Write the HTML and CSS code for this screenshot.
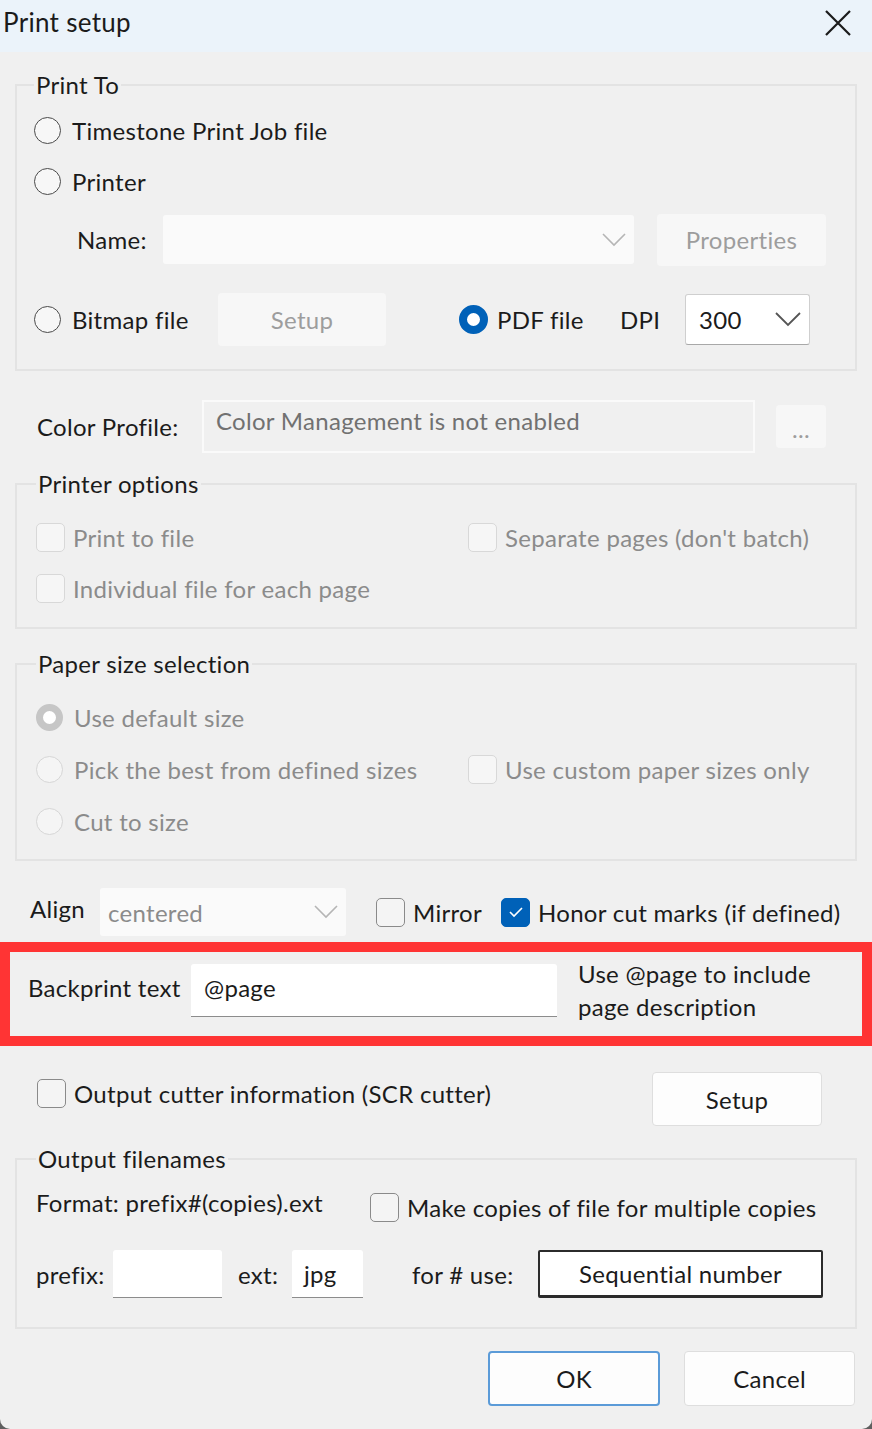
FILE: index.html
```html
<!DOCTYPE html>
<html lang="en">
<head>
    <meta charset="UTF-8">
    <meta name="viewport" content="width=device-width, initial-scale=1.0">
    <title>Print setup</title>
    <link rel="stylesheet" href="styles.css">
</head>
<body>

<div class="dialog">
    <div class="titlebar">
        <span class="title">Print setup</span>
        <svg class="close" width="26" height="26" viewBox="0 0 26 26">
            <path d="M1 1L25 25M25 1L1 25" stroke="#1a1a1a" stroke-width="2.2" fill="none"/>
        </svg>
    </div>

    <div class="content">
        <!-- Print To -->
        <fieldset class="group print-to">
            <legend>Print To</legend>
            <div class="row row-radio">
                <span class="opt"><span class="radio"></span>Timestone Print Job file</span>
            </div>
            <div class="row row-radio">
                <span class="opt"><span class="radio"></span>Printer</span>
            </div>
            <div class="row row-name">
                <span class="name-label">Name:</span>
                <div class="combo name-combo">
                    <span class="combo-text"></span>
                    <svg class="chevron" width="24" height="14" viewBox="0 0 24 14"><path d="M1 1L12 12L23 1" stroke="#b5b5b5" stroke-width="1.6" fill="none"/></svg>
                </div>
                <button class="btn btn-off props">Properties</button>
            </div>
            <div class="row row-output">
                <span class="opt opt-bitmap"><span class="radio"></span>Bitmap file</span>
                <button class="btn btn-off setup-bitmap">Setup</button>
                <span class="opt opt-pdf"><span class="radio radio-on"></span>PDF file</span>
                <span class="dpi-label">DPI</span>
                <div class="combo dpi-combo">
                    <span class="combo-text">300</span>
                    <svg class="chevron" width="26" height="15" viewBox="0 0 26 15"><path d="M1 1L13 13L25 1" stroke="#555" stroke-width="1.8" fill="none"/></svg>
                </div>
            </div>
        </fieldset>

        <!-- Color profile -->
        <div class="row row-profile">
            <span class="profile-label">Color Profile:</span>
            <div class="profile-box">Color Management is not enabled</div>
            <button class="btn btn-off btn-dots">...</button>
        </div>

        <!-- Printer options -->
        <fieldset class="group printer-options">
            <legend>Printer options</legend>
            <div class="row row-check">
                <span class="opt opt-col1 off"><span class="check check-off"></span>Print to file</span>
                <span class="opt off"><span class="check check-off"></span>Separate pages (don't batch)</span>
            </div>
            <div class="row row-check">
                <span class="opt off"><span class="check check-off"></span>Individual file for each page</span>
            </div>
        </fieldset>

        <!-- Paper size -->
        <fieldset class="group paper-size">
            <legend>Paper size selection</legend>
            <div class="row row-paper">
                <span class="opt off"><span class="radio radio-dim"></span>Use default size</span>
            </div>
            <div class="row row-paper">
                <span class="opt opt-col1 off"><span class="radio radio-faint"></span>Pick the best from defined sizes</span>
                <span class="opt off"><span class="check check-off"></span>Use custom paper sizes only</span>
            </div>
            <div class="row row-paper">
                <span class="opt off"><span class="radio radio-faint"></span>Cut to size</span>
            </div>
        </fieldset>

        <!-- Align -->
        <div class="row row-align">
            <span class="align-label">Align</span>
            <div class="combo align-combo">
                <span class="combo-text off">centered</span>
                <svg class="chevron" width="24" height="14" viewBox="0 0 24 14"><path d="M1 1L12 12L23 1" stroke="#b5b5b5" stroke-width="1.6" fill="none"/></svg>
            </div>
            <span class="opt opt-mirror"><span class="check"></span>Mirror</span>
            <span class="opt">
                <span class="check check-on">
                    <svg width="16" height="12" viewBox="0 0 16 12"><path d="M2 6L6 10L14 2" stroke="#fff" stroke-width="1.6" fill="none"/></svg>
                </span>Honor cut marks (if defined)</span>
        </div>

        <!-- Backprint (highlighted) -->
        <div class="highlight">
            <span class="backprint-label">Backprint text</span>
            <div class="field backprint-field">@page</div>
            <div class="hint">Use @page to include<br>page description</div>
        </div>

        <!-- Cutter -->
        <div class="row row-cutter">
            <span class="opt opt-cutter"><span class="check"></span>Output cutter information (SCR cutter)</span>
            <button class="btn btn-light cutter-setup">Setup</button>
        </div>

        <!-- Output filenames -->
        <fieldset class="group output-names">
            <legend>Output filenames</legend>
            <div class="row row-format">
                <span class="format-label">Format: prefix#(copies).ext</span>
                <span class="opt opt-copies"><span class="check"></span>Make copies of file for multiple copies</span>
            </div>
            <div class="row row-prefix">
                <span class="prefix-label">prefix:</span>
                <div class="field prefix-field"></div>
                <span class="ext-label">ext:</span>
                <div class="field ext-field">jpg</div>
                <span class="use-label">for # use:</span>
                <button class="btn btn-seq">Sequential number</button>
            </div>
        </fieldset>

        <div class="row row-buttons">
            <button class="btn btn-light btn-ok">OK</button>
            <button class="btn btn-light btn-cancel">Cancel</button>
        </div>
    </div>
</div>

</body>
</html>
```

FILE: styles.css
```css
html {
    background: #5f5f5f;
}

body {
    margin: 0;
    font-family: Lato, "Open Sans", sans-serif;
    font-size: 24px;
    letter-spacing: 0.3px;
    color: #1b1b1b;
}

.dialog {
    width: 872px;
    height: 1429px;
    background: #f0f0f0;
    border-radius: 0 0 10px 10px;
    overflow: hidden;
}

.titlebar {
    height: 52px;
    background: #ebf3fa;
    display: flex;
    align-items: center;
    justify-content: space-between;
    padding: 0 21px 0 3px;
    box-sizing: border-box;
}

.title {
    font-size: 26px;
    margin-top: -8px;
}

.close {
    margin-top: -6px;
}

.content {
    padding: 0 15px;
}

.row {
    display: flex;
    align-items: center;
}

/* group boxes */
.group {
    margin: 0;
    border: 2px solid #e3e3e3;
    padding: 0 0 0 19px;
    min-width: 0;
}

.group legend {
    padding: 0 2px;
    margin-left: 0;
    line-height: 28px;
    height: 28px;
}

/* option = indicator + text */
.opt {
    display: flex;
    align-items: center;
    gap: 8px;
    white-space: nowrap;
}

.off {
    color: #8b8b8b;
}

.radio {
    width: 27px;
    height: 27px;
    border: 1.6px solid #4a4a4a;
    border-radius: 50%;
    box-sizing: border-box;
    background: #f7f7f7;
    flex: none;
    margin-right: 3px;
}

.radio-on {
    border: 8px solid #0061b8;
    background: #fff;
    width: 29px;
    height: 29px;
    margin-right: 1px;
}

.radio-dim {
    border: 7px solid #c6c6c6;
    background: #fff;
    width: 27px;
    height: 27px;
}

.radio-faint {
    border: 1.5px solid #d6d6d6;
    background: #f5f5f5;
}

.check {
    width: 29px;
    height: 29px;
    border: 1.6px solid #8a8a8a;
    border-radius: 5px;
    box-sizing: border-box;
    background: #f4f4f4;
    flex: none;
    display: flex;
    align-items: center;
    justify-content: center;
}

.check-off {
    border-color: #d8d8d8;
    background: #f6f6f6;
}

.check-on {
    background: #0061b8;
    border-color: #0061b8;
}

/* buttons */
.btn {
    font-family: inherit;
    font-size: 24px;
    letter-spacing: 0.3px;
    border: none;
    padding: 0;
    color: #1b1b1b;
    background: #fdfdfd;
    border-radius: 4px;
}

.btn-off {
    background: #f7f7f7;
    color: #9d9d9d;
}

.btn-light {
    background: #fdfdfd;
    border: 1.5px solid #dedede;
}

/* combos and fields */
.combo {
    display: flex;
    align-items: center;
    justify-content: space-between;
    box-sizing: border-box;
    background: #fafafa;
    border-radius: 3px;
}

.combo-text {
    padding-left: 8px;
}

.chevron {
    margin-right: 8px;
}

.field {
    background: #fff;
    border-bottom: 1.5px solid #8c8c8c;
    box-sizing: border-box;
    display: flex;
    align-items: center;
    border-radius: 3px 3px 0 0;
}

/* Print To */
.print-to {
    margin-top: 19px;
    padding-top: 6px;
    padding-bottom: 23px;
    padding-left: 17px;
}

.row-radio {
    height: 51px;
}

.row-name {
    height: 53px;
    margin-top: 6px;
}

.name-label {
    margin-left: 43px;
    width: 86px;
}

.name-combo {
    width: 471px;
    height: 49px;
}

.props {
    width: 169px;
    height: 52px;
    margin-left: 23px;
}

.row-output {
    height: 53px;
    margin-top: 27px;
}

.opt-bitmap {
    width: 184px;
}

.setup-bitmap {
    width: 168px;
    height: 53px;
}

.opt-pdf {
    margin-left: 73px;
    width: 161px;
}

.dpi-label {
    width: 65px;
}

.dpi-combo {
    width: 125px;
    height: 51px;
    background: #fff;
    border: 1.5px solid #cfcfcf;
    border-bottom-color: #a8a8a8;
    padding-left: 5px;
}

/* Color profile */
.row-profile {
    margin-top: 29px;
    height: 53px;
}

.profile-label {
    padding-left: 22px;
    width: 165px;
}

.profile-box {
    width: 553px;
    height: 53px;
    box-sizing: border-box;
    border: 2px solid #fafafa;
    color: #717171;
    padding: 1px 0 0 12px;
    line-height: 36px;
}

.btn-dots {
    width: 50px;
    height: 43px;
    margin-left: 21px;
    line-height: 30px;
    padding-top: 4px;
}

/* Printer options */
.printer-options {
    margin-top: 17px;
    padding-top: 14px;
    padding-bottom: 13px;
}

.row-check {
    height: 51px;
}

.opt-col1 {
    width: 432px;
}

/* Paper size */
.paper-size {
    margin-top: 21px;
    padding-top: 13px;
    padding-bottom: 12px;
}

.row-paper {
    height: 52px;
}

/* Align row */
.row-align {
    margin-top: 27px;
    height: 48px;
}

.align-label {
    width: 70px;
    padding-left: 15px;
    margin-top: -8px;
}

.align-combo {
    width: 246px;
    height: 48px;
}

.opt-mirror {
    margin-left: 30px;
    width: 125px;
}

/* highlighted backprint row */
.highlight {
    margin: 6px -15px 0;
    border: 10px solid #ff3434;
    height: 104px;
    box-sizing: border-box;
    display: flex;
    align-items: center;
    padding-left: 18px;
}

.backprint-label {
    width: 163px;
    margin-top: -14px;
}

.backprint-field {
    width: 366px;
    height: 53px;
    padding: 0 0 4px 13px;
    margin-top: -8px;
}

.hint {
    margin-left: 21px;
    line-height: 33px;
    margin-top: -8px;
}

/* cutter */
.row-cutter {
    margin-top: 26px;
    height: 54px;
}

.opt-cutter {
    padding-left: 22px;
    width: 615px;
    margin-top: -12px;
}

.cutter-setup {
    width: 170px;
    height: 54px;
}

/* Output filenames */
.output-names {
    margin-top: 19px;
    padding-top: 12px;
    padding-bottom: 29px;
}

.row-format {
    height: 40px;
}

.format-label {
    width: 334px;
    margin-top: -6px;
}

.opt-copies {
    margin-top: 4px;
}

.row-prefix {
    margin-top: 25px;
    height: 48px;
}

.prefix-label {
    width: 77px;
}

.prefix-field {
    width: 109px;
    height: 48px;
}

.ext-label {
    margin-left: 16px;
    width: 54px;
}

.ext-field {
    width: 71px;
    height: 48px;
    padding-left: 12px;
}

.use-label {
    margin-left: 49px;
    width: 126px;
}

.btn-seq {
    width: 285px;
    height: 48px;
    background: #fff;
    border: 2px solid #2b2b2b;
    border-bottom-width: 3px;
    border-radius: 2px;
}

/* bottom buttons */
.row-buttons {
    margin-top: 22px;
    justify-content: flex-end;
    padding-right: 2px;
    gap: 24px;
}

.btn-ok {
    width: 172px;
    height: 55px;
    border-color: #5b9bd8;
    border-width: 2px;
}

.btn-cancel {
    width: 171px;
    height: 55px;
}
```
